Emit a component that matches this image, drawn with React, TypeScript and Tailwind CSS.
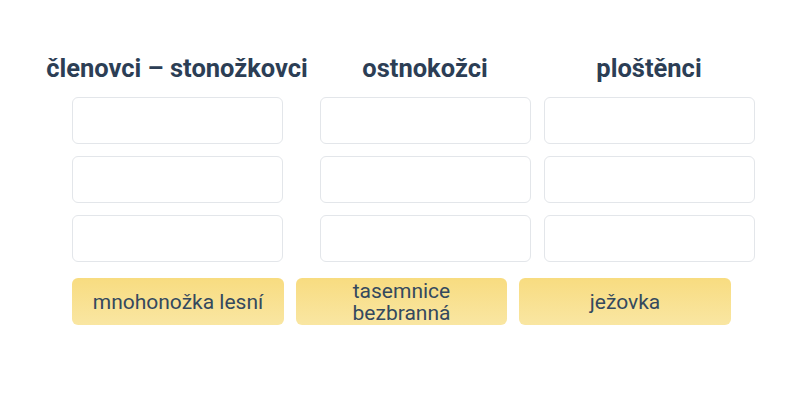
import React from "react";

const cols = [
  { t: "členovci – stonožkovci", w: "w-[261px]" },
  { t: "ostnokožci", w: "w-[211px]" },
  { t: "ploštěnci", w: "w-[213px]" },
];
const cards = [["mnohonožka lesní"], ["tasemnice", "bezbranná"], ["ježovka"]];

export default function App() {
  return (
    <div className="w-[800px] h-[400px] bg-white flex flex-col items-center pt-[50px]" style={{ fontFamily: "Roboto, 'Noto Sans', sans-serif" }}>
      <div className="flex gap-[12px] pl-[2px]">
        {cols.map((c) => (
          <div key={c.t} className={`flex flex-col items-center ${c.w}`}>
            <div className="text-[25.5px] leading-[36px] font-bold text-[#2c3e55] whitespace-nowrap">{c.t}</div>
            <div className="flex flex-col gap-[12px] mt-[11px]">
              {[0, 1, 2].map((i) => (
                <div key={i} className="w-[211px] h-[47px] rounded-[6px] border border-[#e3e6ea] bg-white" />
              ))}
            </div>
          </div>
        ))}
      </div>
      <div className="flex gap-[12px] mt-[16px] pl-[3px]">
        {cards.map((c, i) => (
          <div key={i} className="w-[211.5px] h-[47px] rounded-[6px] bg-gradient-to-b from-[#f8dc80] to-[#f9e6a2] flex flex-col items-center justify-center text-[#34495e] text-[21px] leading-[22px]">
            {c.map((l) => (
              <span key={l}>{l}</span>
            ))}
          </div>
        ))}
      </div>
    </div>
  );
}
